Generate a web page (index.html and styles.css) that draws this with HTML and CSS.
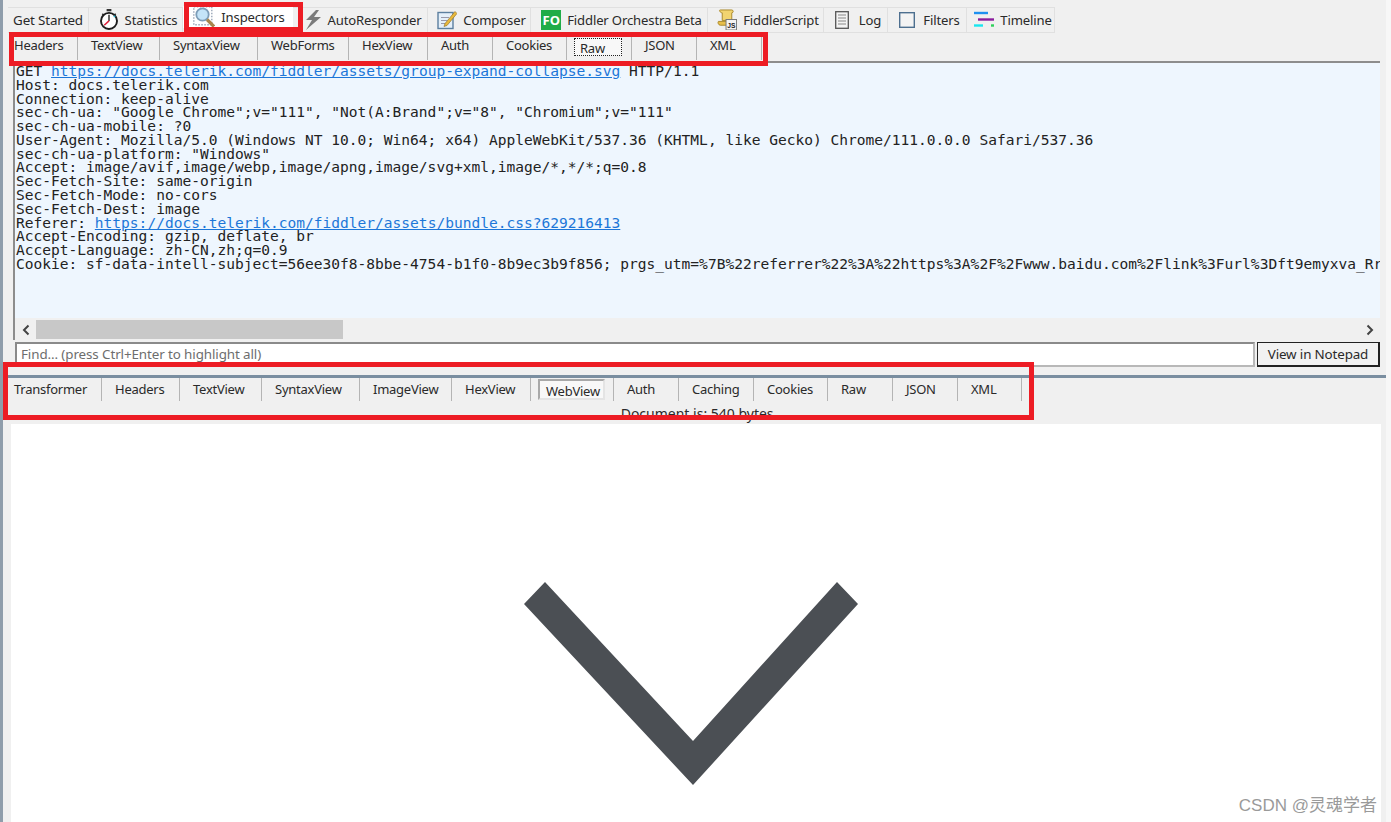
FILE: index.html
```html
<!DOCTYPE html>
<html lang="en">
<head>
<meta charset="utf-8">
<title>Fiddler Inspectors</title>
<link rel="stylesheet" href="styles.css">
</head>
<body>
<div class="app">
  <nav class="main-tabs">
    <div class="mtab mtab-plain"><span>Get Started</span></div>
    <div class="mtab"><svg class="ico" viewBox="0 0 20 22"><rect x="7.5" y="0" width="5" height="2.4" fill="#333"/><path d="M3 5l2 2M17 5l-2 2" stroke="#333" stroke-width="1.6"/><circle cx="10" cy="12.5" r="8.4" fill="#fff" stroke="#1d1d1d" stroke-width="2"/><path d="M10 12.5V6" stroke="#2a2a2a" stroke-width="1.5"/><path d="M10 12.5L5 17" stroke="#e0203a" stroke-width="1.6"/><path d="M15 8.5l1.5-1.5" stroke="#28b8d8" stroke-width="1.4"/></svg><span>Statistics</span></div>
    <div class="mtab mtab-on"><svg class="ico ico-lg" viewBox="0 0 22 22"><rect x=".8" y=".8" width="18" height="18" fill="#fff" stroke="#9aa6b8" stroke-width="1.4" stroke-dasharray="1.5 1.5"/><circle cx="9.5" cy="8.5" r="6.2" fill="#c4e4f8" stroke="#7d9db8" stroke-width="1.8"/><path d="M14 13.5l7 7" stroke="#a8854c" stroke-width="3.2"/></svg><span>Inspectors</span></div>
    <div class="mtab"><svg class="ico ico-sm" viewBox="0 0 18 20"><path d="M12 0L2 10h6l-6 10L17 7h-7l5-7z" fill="#7b7b7b"/></svg><span>AutoResponder</span></div>
    <div class="mtab"><svg class="ico" viewBox="0 0 20 20"><rect x="1" y="3" width="15" height="16" fill="#e4eff9" stroke="#5c7f9f" stroke-width="1.4"/><path d="M4 8h8M4 11h6M4 14h5" stroke="#99a" stroke-width="1"/><path d="M8 14L18 2l2 2L10 16l-3 1z" fill="#e8b83c" stroke="#8a6a20" stroke-width=".6"/></svg><span>Composer</span></div>
    <div class="mtab"><span class="fo">FO</span><span>Fiddler Orchestra Beta</span></div>
    <div class="mtab"><svg class="ico" viewBox="0 0 20 22"><path d="M3 1h12c2 0 2 3 0 3v8H5V4C3 4 1 1 3 1z" fill="#f2d470" stroke="#a8862a"/><path d="M1 13h10v4H3c-2 0-3-3-2-4z" fill="#e8bf4a" stroke="#a8862a"/><rect x="9" y="11" width="11" height="11" fill="#f4f4f4" stroke="#777"/><text x="14.5" y="20" class="js">JS</text></svg><span>FiddlerScript</span></div>
    <div class="mtab"><svg class="ico ico-doc" viewBox="0 0 14 18"><rect x=".7" y=".7" width="12.6" height="16.6" fill="#f4f4f4" stroke="#555" stroke-width="1.3"/><path d="M3 4h8M3 7h8M3 10h8M3 13h8" stroke="#888"/></svg><span>Log</span></div>
    <div class="mtab"><svg class="ico ico-sq" viewBox="0 0 16 16"><rect x=".7" y=".7" width="14.6" height="14.6" fill="#f3f3f3" stroke="#4d6f8f" stroke-width="1.4"/></svg><span>Filters</span></div>
    <div class="mtab"><svg class="ico" viewBox="0 0 20 16"><path d="M0 1.5h14" stroke="#1e90f0" stroke-width="2.4"/><path d="M4 8h16" stroke="#8a1c9c" stroke-width="2.4"/><path d="M0 14h9" stroke="#19e6ef" stroke-width="2.4"/><path d="M17 14h3" stroke="#2fd05a" stroke-width="2.4"/></svg><span>Timeline</span></div>
  </nav>

  <section class="req">
    <div class="subtabs subtabs-req">
      <div class="stab stab-first">Headers</div>
      <div class="stab">TextView</div>
      <div class="stab">SyntaxView</div>
      <div class="stab">WebForms</div>
      <div class="stab">HexView</div>
      <div class="stab">Auth</div>
      <div class="stab">Cookies</div>
      <div class="stab stab-box"><span class="focus">Raw</span></div>
      <div class="stab">JSON</div>
      <div class="stab">XML</div>
    </div>
    <div class="pane">
<pre class="raw">GET <a href="#">https://docs.telerik.com/fiddler/assets/group-expand-collapse.svg</a> HTTP/1.1
Host: docs.telerik.com
Connection: keep-alive
sec-ch-ua: "Google Chrome";v="111", "Not(A:Brand";v="8", "Chromium";v="111"
sec-ch-ua-mobile: ?0
User-Agent: Mozilla/5.0 (Windows NT 10.0; Win64; x64) AppleWebKit/537.36 (KHTML, like Gecko) Chrome/111.0.0.0 Safari/537.36
sec-ch-ua-platform: "Windows"
Accept: image/avif,image/webp,image/apng,image/svg+xml,image/*,*/*;q=0.8
Sec-Fetch-Site: same-origin
Sec-Fetch-Mode: no-cors
Sec-Fetch-Dest: image
Referer: <a href="#">https://docs.telerik.com/fiddler/assets/bundle.css?629216413</a>
Accept-Encoding: gzip, deflate, br
Accept-Language: zh-CN,zh;q=0.9
Cookie: sf-data-intell-subject=56ee30f8-8bbe-4754-b1f0-8b9ec3b9f856; prgs_utm=%7B%22referrer%22%3A%22https%3A%2F%2Fwww.baidu.com%2Flink%3Furl%3Dft9emyxva_Rr</pre>
      <div class="scroll">
        <svg class="arrow" viewBox="0 0 8 12"><path d="M6.5 1.5L2 6l4.5 4.5" fill="none" stroke="#444" stroke-width="2"/></svg>
        <div class="track"><div class="thumb"></div></div>
        <svg class="arrow" viewBox="0 0 8 12"><path d="M1.5 1.5L6 6l-4.5 4.5" fill="none" stroke="#444" stroke-width="2"/></svg>
      </div>
    </div>
    <div class="findrow">
      <div class="find">Find... (press Ctrl+Enter to highlight all)</div>
      <div class="notepad">View in Notepad</div>
    </div>
  </section>

  <div class="splitter"></div>

  <section class="resp">
    <div class="subtabs subtabs-resp">
      <div class="stab stab-first">Transformer</div>
      <div class="stab">Headers</div>
      <div class="stab">TextView</div>
      <div class="stab">SyntaxView</div>
      <div class="stab">ImageView</div>
      <div class="stab">HexView</div>
      <div class="stab stab-box"><span class="webview">WebView</span></div>
      <div class="stab">Auth</div>
      <div class="stab">Caching</div>
      <div class="stab">Cookies</div>
      <div class="stab">Raw</div>
      <div class="stab">JSON</div>
      <div class="stab">XML</div>
    </div>
    <div class="docinfo">Document is: 540 bytes.</div>
    <div class="view">
      <svg class="chevron" viewBox="0 0 334 203"><polygon points="21,0 169,159 313,0 334,22 169,203 0,22" fill="#4b4f54"/></svg>
    </div>
  </section>

  <div class="mark mark-a"></div>
  <div class="mark mark-b"></div>
  <div class="mark mark-c"></div>
  <div class="watermark">CSDN @灵魂学者</div>
</div>
</body>
</html>
```
FILE: styles.css
```css
* { box-sizing: border-box; }
html, body { margin: 0; height: 100%; }
body {
  background: #f7f7f7;
  color: #2a2a2a;
  font-family: "Noto Sans", "Open Sans", sans-serif;
  font-size: 13.4px;
  overflow: hidden;
}
.app {
  position: relative;
  width: 1391px;
  height: 822px;
  overflow: hidden;
  border-left: 3px solid #8f9dab;
  display: flex;
  flex-direction: column;
  background: linear-gradient(#f0f0f0, #f0f0f0) no-repeat 0 0 / 1383px 100%;
}

/* main tab strip */
.main-tabs {
  display: grid;
  grid-template-columns: 81px 94px 110px 135px 103px 177px 116px 64px 79px 88px;
  height: 33px;
  margin-left: 5px;
  padding-top: 7px;
  flex: none;
  font-size: 13.1px;
}
.mtab {
  display: flex;
  align-items: center;
  justify-content: center;
  gap: 6px;
  padding: 0 0 1px 5px;
  background: #f0f0f0;
  border: 1px solid #e0e0e0;
  border-left: 0;
  white-space: nowrap;
  letter-spacing: -.15px;
}
.mtab-plain { padding-left: 0; font-size: 13.4px; }
.mtab-on {
  background: #fff;
  margin: -1px 0 5px;
  border: 0;
  padding: 0 0 0 2px;
}
.ico { width: 20px; height: 21px; flex: none; }
.ico-lg { width: 22px; height: 22px; }
.ico-sm { width: 18px; height: 20px; }
.ico-doc { width: 14px; height: 18px; margin-right: 4px; }
.ico-sq { width: 16px; height: 16px; margin-right: 2px; }
.fo {
  background: #20ac48;
  color: #fff;
  font-weight: 700;
  font-size: 13px;
  width: 20px;
  height: 20px;
  line-height: 20px;
  text-align: center;
  letter-spacing: 0;
}
.js { font: 700 7px "Liberation Sans", sans-serif; text-anchor: middle; fill: #222; }

/* sub tabs */
.subtabs { display: grid; flex: none; font-size: 13px; }
.subtabs-req {
  grid-template-columns: 69px 82px 98px 91px 79px 65px 74px 65px 65px 65px;
  height: 28px;
  padding: 3px 0 6px;
}
.subtabs-resp {
  grid-template-columns: 99px 78px 82px 98px 92px 79px 83px 65px 75px 74px 65px 65px 64px;
  height: 23px;
}
.stab {
  display: flex;
  align-items: center;
  padding-left: 13px;
  border-right: 1px solid #b4b4b4;
  letter-spacing: -.25px;
  white-space: nowrap;
}
.subtabs-req .stab { padding-bottom: 6px; }
.subtabs-resp .stab { padding-bottom: 2px; }
.subtabs-req .stab-first { padding-left: 5px; }
.subtabs-resp .stab-first { padding-left: 11px; }
.subtabs .stab-box { padding: 0 0 0 7px; }
.focus {
  width: 48px;
  height: 18px;
  margin-bottom: 3px;
  padding-left: 5px;
  background: #f8f8f8;
  border: 1px dotted #222;
  line-height: 18px;
}
.webview {
  width: 67px;
  height: 21px;
  line-height: 20px;
  padding-left: 6px;
  background: #f8f8f8;
  border: 2px solid #a8a8a8;
  border-right-color: #e4e4e4;
  border-bottom-color: #e4e4e4;
}

/* request */
.req { flex: none; height: 342px; margin-left: 6px; width: 1371px; display: flex; flex-direction: column; }
.pane {
  margin-left: 4px;
  border-top: 2px solid #8d8d8d;
  border-left: 2px solid #8d8d8d;
  width: 1367px;
  flex: none;
}
.raw {
  margin: 0;
  height: 255px;
  padding: 1px 0 0 1px;
  overflow: hidden;
  background: #eef6fe;
  color: #222;
  font-family: "DejaVu Sans Mono", "Liberation Mono", monospace;
  font-size: 14.55px;
  line-height: 13.78px;
  white-space: pre;
}
.raw a { color: #1c76d8; }
.scroll { height: 21px; display: flex; align-items: center; padding: 0 6px 0 7px; margin-top: 1px; }
.arrow { width: 8px; height: 12px; flex: none; }
.track { flex: 1; height: 100%; padding: 1px 6px 1px 6px; }
.thumb { width: 307px; height: 19px; background: #c8c8c8; }
.findrow { display: flex; gap: 2px; margin: 2px 0 0 6px; width: 1365px; height: 25px; flex: none; }
.find {
  flex: 1;
  background: #fff;
  border: 2px solid #8a8a8a;
  border-bottom-color: #b8b8b8;
  border-right-color: #b8b8b8;
  color: #6d6d6d;
  padding-left: 4px;
  line-height: 20px;
  white-space: nowrap;
  letter-spacing: -.1px;
}
.notepad {
  width: 123px;
  border: 2px solid #222;
  border-left-width: 1px;
  border-top-width: 1px;
  background: #f2f2f2;
  text-align: center;
  line-height: 22px;
  white-space: nowrap;
  letter-spacing: -.15px;
}

/* splitter */
.splitter { height: 3px; width: 1383px; flex: none; background: #7a8ea0; }

/* response */
.resp { flex: 1; display: flex; flex-direction: column; width: 1383px; }
.docinfo {
  flex: none;
  width: 1392px;
  height: 23px;
  padding-top: 3px;
  line-height: 20px;
  text-align: center;
  color: #2a2a2a;
  font-size: 14px;
}
.view {
  flex: 1;
  margin: 0 5px 0 8px;
  background: #fff;
  display: flex;
  justify-content: center;
  padding: 158px 11px 0 0;
}
.chevron { width: 334px; height: 203px; flex: none; }

/* annotation boxes over the screenshot */
.mark { position: absolute; border: 5px solid #ed1c24; pointer-events: none; }
.mark-a { left: 181px; top: 2px; width: 119px; height: 30px; }
.mark-b { left: 6px; top: 32px; width: 759px; height: 34px; }
.mark-c { left: 0; top: 362px; width: 1031px; height: 58px; }

.watermark {
  position: absolute;
  right: 14px;
  bottom: 6px;
  color: #9a9a9a;
  font-family: "Liberation Sans", "Noto Sans CJK SC", sans-serif;
  font-size: 17px;
  line-height: 20px;
  white-space: nowrap;
}
```
